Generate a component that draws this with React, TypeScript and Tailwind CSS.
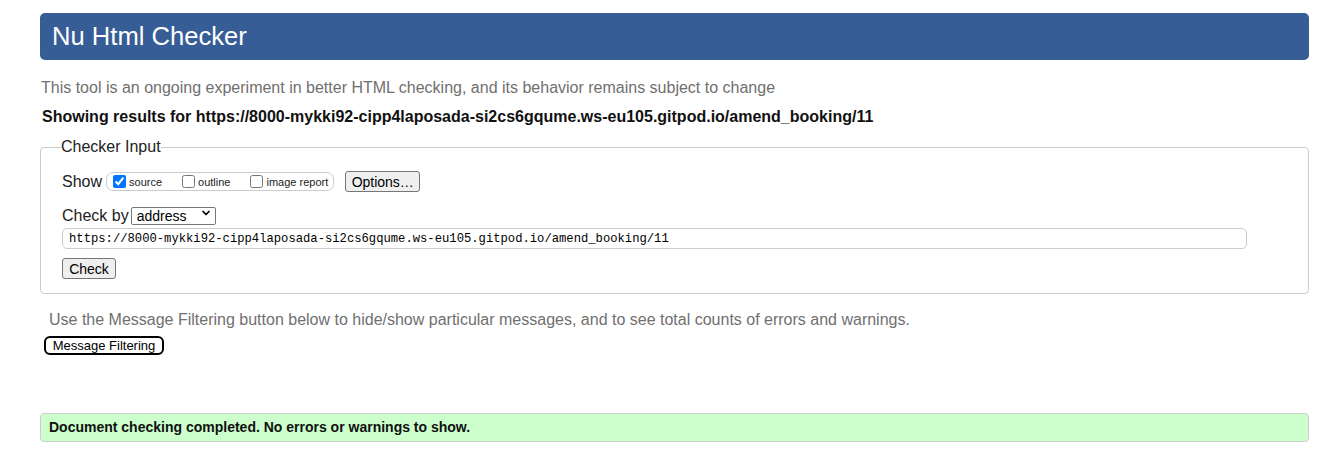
import { ChevronDown } from "lucide-react";

const checkedUrl =
  "https://8000-mykki92-cipp4laposada-si2cs6gqume.ws-eu105.gitpod.io/amend_booking/11";

const showOptions = [
  { id: "source", label: "source", checked: true },
  { id: "outline", label: "outline", checked: false },
  { id: "image-report", label: "image report", checked: false },
];

const App = () => {
  return (
    <div className="min-h-[452px] bg-white pt-[13px] font-['Liberation_Sans',Arial,sans-serif]">
      <div className="ml-[40px] w-[1269px]">
        {/* Titre */}
        <header className="flex h-[47px] items-center rounded-[5px] bg-[#365d95] pl-[12px]">
          <h1 className="text-[25.6px] leading-none text-white">Nu Html Checker</h1>
        </header>

        <p className="mt-[18px] pl-px text-[16px] leading-[20px] text-[#707070]">
          This tool is an ongoing experiment in better HTML checking, and its
          behavior remains subject to change
        </p>
        <p className="mt-[9px] pl-[2px] text-[16px] font-bold leading-[20px] text-[#111]">
          Showing results for {checkedUrl}
        </p>

        {/* Formulaire */}
        <fieldset className="mt-[11px] rounded-[4px] border border-[#cccccc] px-[21px] pt-[15px] pb-[12px]">
          <legend className="-ml-px text-[16px] leading-[18px] text-[#222]">
            Checker Input
          </legend>

          <div className="flex h-[21px] items-center">
            <span className="text-[16px] leading-none text-[#222]">Show</span>
            <div className="ml-[4px] flex h-[19px] items-center rounded-[7px] border border-[#cccccc] pr-[5px] pl-[6px]">
              {showOptions.map((option, i) => (
                <label
                  key={option.id}
                  className={`flex items-center text-[11px] leading-none text-[#222] ${
                    i > 0 ? "ml-[20px]" : ""
                  }`}
                >
                  <input
                    type="checkbox"
                    defaultChecked={option.checked}
                    className="m-0 h-[13px] w-[13px]"
                  />
                  <span className="ml-[3px] mt-[2px]">{option.label}</span>
                </label>
              ))}
            </div>
            <button className="ml-[11px] h-[21px] w-[75px] rounded-[3px] border border-[#767676] bg-[#efefef] text-[14px] leading-none text-black">
              Options…
            </button>
          </div>

          <div className="mt-[14px] flex h-[19px] items-center">
            <span className="text-[16px] leading-none text-[#222]">Check by</span>
            <div className="relative ml-[2px]">
              <select
                defaultValue="address"
                className="h-[18px] w-[85px] appearance-none rounded-[2px] border border-[#767676] bg-white pl-[5px] text-[14px] leading-none text-black"
              >
                <option value="address">address</option>
                <option value="file">file upload</option>
                <option value="textarea">text input</option>
              </select>
              <ChevronDown
                size={12}
                strokeWidth={3.5}
                className="pointer-events-none absolute top-[3px] right-[4px] text-black"
              />
            </div>
          </div>

          <input
            type="text"
            defaultValue={checkedUrl}
            className="mt-[3px] block h-[21px] w-[1185px] rounded-[5px] border border-[#cccccc] pl-[6px] font-['Liberation_Mono',monospace] text-[12.2px] text-black"
          />

          <button className="mt-[9px] h-[21px] w-[54px] rounded-[3px] border border-[#767676] bg-[#efefef] text-[14px] leading-none text-black">
            Check
          </button>
        </fieldset>

        <p className="mt-[16px] pl-[9px] text-[16px] leading-[20px] text-[#707070]">
          Use the Message Filtering button below to hide/show particular
          messages, and to see total counts of errors and warnings.
        </p>
        <button className="mt-[6px] ml-[4px] flex h-[19px] w-[120px] items-center justify-center rounded-[6px] border-2 border-black bg-white text-[13px] leading-none text-black">
          Message Filtering
        </button>

        {/* Résultat */}
        <div className="mt-[58px] flex h-[29px] items-center rounded-[4px] border border-[#cccccc] bg-[#ccffcc] pl-[8px]">
          <p className="text-[14px] font-bold leading-none text-[#111]">
            Document checking completed. No errors or warnings to show.
          </p>
        </div>
      </div>
    </div>
  );
};

export default App;
